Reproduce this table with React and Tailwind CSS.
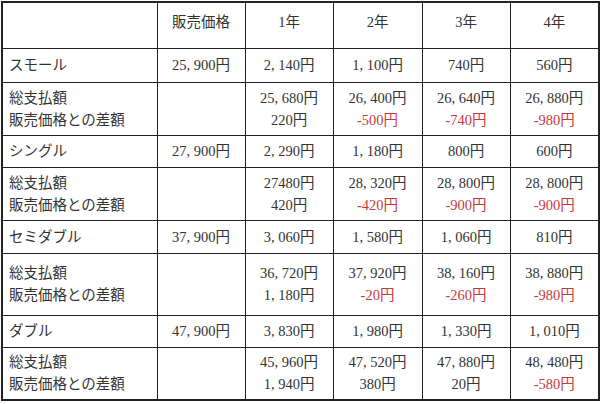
import React from 'react';

const rows = [
  {
    name: 'スモール',
    price: '25, 900円',
    h: 'h-[34px]',
    h2: 'h-[53px]',
    yearly: ['2, 140円', '1, 100円', '740円', '560円'],
    total: ['25, 680円', '26, 400円', '26, 640円', '26, 880円'],
    diff: ['220円', '-500円', '-740円', '-980円'],
  },
  {
    name: 'シングル',
    price: '27, 900円',
    h: 'h-[32px]',
    h2: 'h-[53px]',
    yearly: ['2, 290円', '1, 180円', '800円', '600円'],
    total: ['27480円', '28, 320円', '28, 800円', '28, 800円'],
    diff: ['420円', '-420円', '-900円', '-900円'],
  },
  {
    name: 'セミダブル',
    price: '37, 900円',
    h: 'h-[33px]',
    h2: 'h-[62px]',
    yearly: ['3, 060円', '1, 580円', '1, 060円', '810円'],
    total: ['36, 720円', '37, 920円', '38, 160円', '38, 880円'],
    diff: ['1, 180円', '-20円', '-260円', '-980円'],
  },
  {
    name: 'ダブル',
    price: '47, 900円',
    h: 'h-[32px]',
    h2: 'h-[53px]',
    yearly: ['3, 830円', '1, 980円', '1, 330円', '1, 010円'],
    total: ['45, 960円', '47, 520円', '47, 880円', '48, 480円'],
    diff: ['1, 940円', '380円', '20円', '-580円'],
  },
];

const cell = 'border border-[#222] p-0';

export default function App() {
  return (
    <div className="w-[600px] h-[404px] bg-white pt-[1px] pl-[1px]">
      <table
        className="table-fixed border-collapse border-2 border-[#222] text-[#333] text-[14.5px] leading-[22px]"
        style={{ fontFamily: '"Liberation Serif", "Noto Sans CJK JP", serif', width: 598 }}
      >
        <colgroup>
          <col className="w-[155px]" />
          <col className="w-[88px]" />
          <col className="w-[88px]" />
          <col className="w-[89px]" />
          <col className="w-[88px]" />
          <col className="w-[89px]" />
        </colgroup>
        <tbody>
          <tr className="h-[46px]">
            <td className={cell}></td>
            {['販売価格', '1年', '2年', '3年', '4年'].map((t) => (
              <td key={t} className={`${cell} text-center align-top pt-[8px]`}>
                {t}
              </td>
            ))}
          </tr>
          {rows.map((r) => (
            <React.Fragment key={r.name}>
              <tr className={r.h}>
                <td className={`${cell} pl-[6px]`}>{r.name}</td>
                <td className={`${cell} text-center`}>{r.price}</td>
                {r.yearly.map((v, i) => (
                  <td key={i} className={`${cell} text-center`}>
                    {v}
                  </td>
                ))}
              </tr>
              <tr className={r.h2}>
                <td className={`${cell} pl-[6px]`}>
                  <div>総支払額</div>
                  <div>販売価格との差額</div>
                </td>
                <td className={cell}></td>
                {r.total.map((v, i) => (
                  <td key={i} className={`${cell} text-center`}>
                    <div>{v}</div>
                    <div className={r.diff[i].startsWith('-') ? 'text-[#c73a3a]' : ''}>
                      {r.diff[i]}
                    </div>
                  </td>
                ))}
              </tr>
            </React.Fragment>
          ))}
        </tbody>
      </table>
    </div>
  );
}
